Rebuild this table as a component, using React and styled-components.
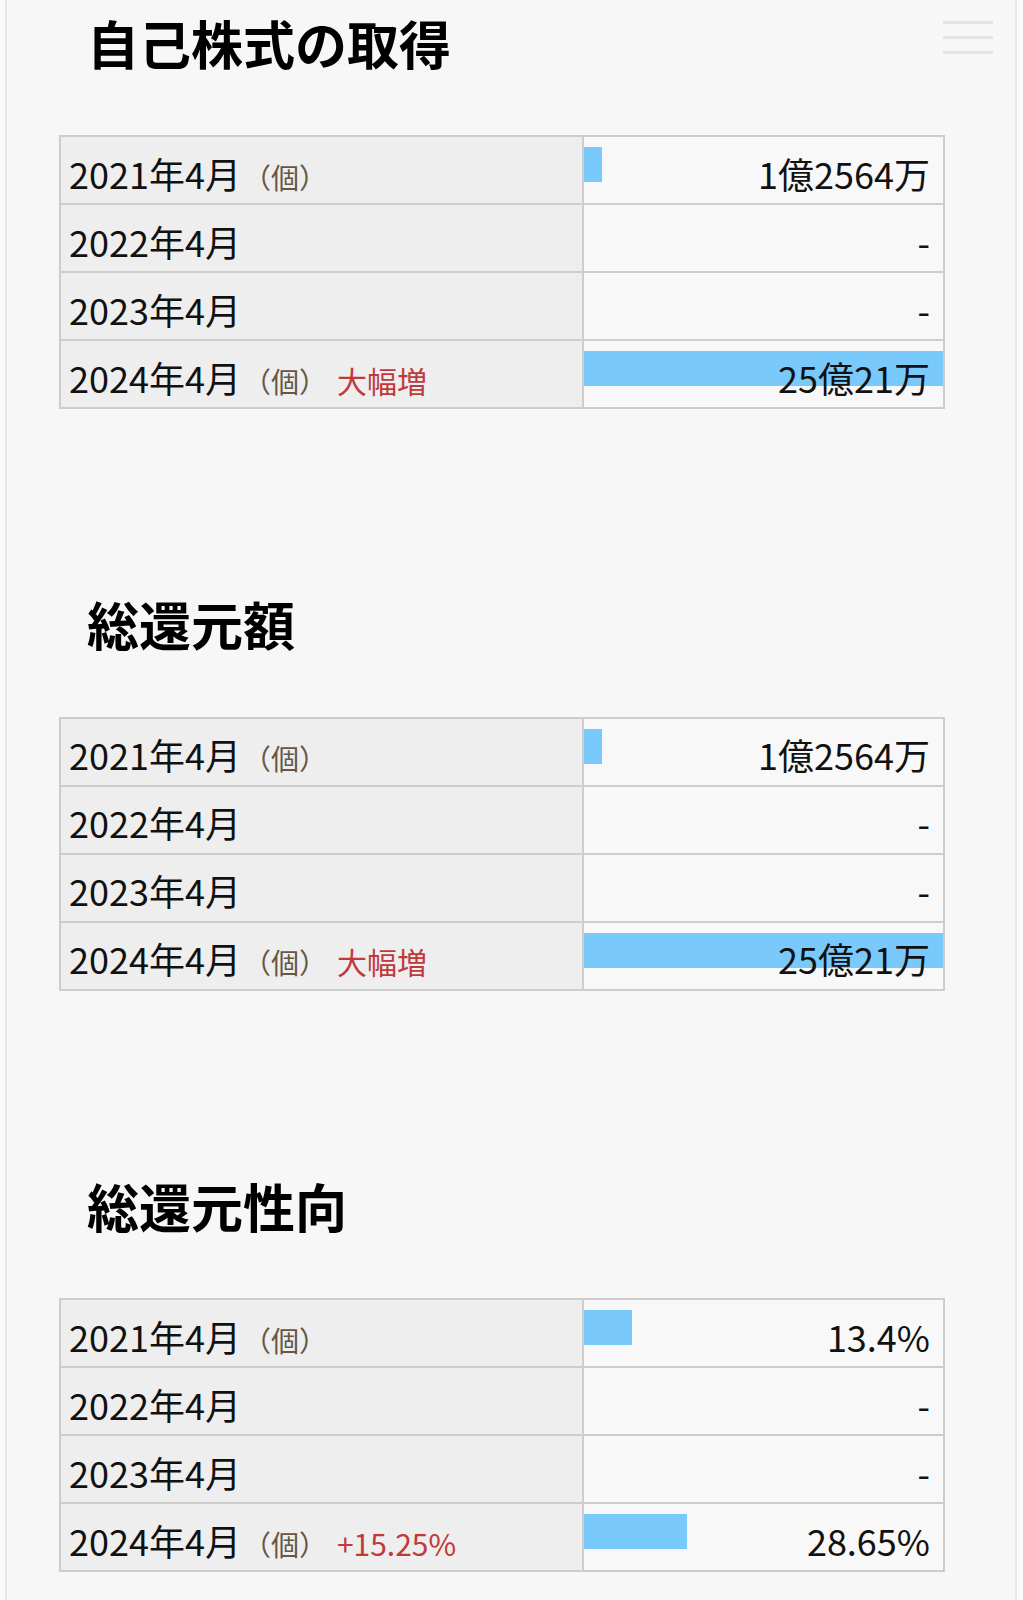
import React from 'react';
import styled, { createGlobalStyle } from 'styled-components';

const GlobalStyle = createGlobalStyle`
  html, body {
    margin: 0;
    padding: 0;
    background: #fafafa;
  }
  body {
    font-family: "Noto Sans CJK JP", "Noto Sans", sans-serif;
    color: #111;
  }
`;

const sections = [
  {
    title: '自己株式の取得',
    rows: [
      { period: '2021年4月', unit: true, value: '1億2564万', bar: 5 },
      { period: '2022年4月', value: '-' },
      { period: '2023年4月', value: '-' },
      { period: '2024年4月', unit: true, note: '大幅増', value: '25億21万', bar: 100 },
    ],
  },
  {
    title: '総還元額',
    rows: [
      { period: '2021年4月', unit: true, value: '1億2564万', bar: 5 },
      { period: '2022年4月', value: '-' },
      { period: '2023年4月', value: '-' },
      { period: '2024年4月', unit: true, note: '大幅増', value: '25億21万', bar: 100 },
    ],
  },
  {
    title: '総還元性向',
    rows: [
      { period: '2021年4月', unit: true, value: '13.4%', bar: 13.4 },
      { period: '2022年4月', value: '-' },
      { period: '2023年4月', value: '-' },
      { period: '2024年4月', unit: true, note: '+15.25%', value: '28.65%', bar: 28.65 },
    ],
  },
];

const App = () => {
  return (
    <Page>
      <GlobalStyle />
      <MenuButton aria-label="menu">
        <MenuLine />
        <MenuLine />
        <MenuLine />
      </MenuButton>
      {sections.map((section) => (
        <Section key={section.title}>
          <Heading>{section.title}</Heading>
          <DataTable>
            {section.rows.map((row) => (
              <Row key={row.period}>
                <LabelCell>
                  <Label>
                    {row.period}
                    {row.unit && <Unit>（個）</Unit>}
                    {row.note && <Note>{row.note}</Note>}
                  </Label>
                </LabelCell>
                <ValueCell>
                  {row.bar && <Bar style={{ width: `${row.bar}%` }} />}
                  <Value>{row.value}</Value>
                </ValueCell>
              </Row>
            ))}
          </DataTable>
        </Section>
      ))}
    </Page>
  );
};

const Page = styled.div`
  position: relative;
  margin: 0 6px 0 5px;
  min-height: 1600px;
  box-sizing: border-box;
  padding: 12px 0 0 52px;
  background: #f7f7f7;
  border-left: 2px solid #e6e6e6;
  border-right: 2px solid #e6e6e6;
`;

const MenuButton = styled.div`
  position: absolute;
  top: 21px;
  right: 22px;
  width: 50px;
  display: flex;
  flex-direction: column;
  gap: 12px;
`;

const MenuLine = styled.span`
  display: block;
  height: 3px;
  background: #e4e4e4;
`;

const Section = styled.section`
  margin-bottom: 184px;

  &:last-child {
    margin-bottom: 0;
  }
`;

const Heading = styled.h2`
  margin: 0 0 61px;
  padding-left: 28px;
  font-size: 52px;
  line-height: 1.2;
  font-weight: 700;
  color: #000;
`;

const DataTable = styled.div`
  width: 886px;
  box-sizing: border-box;
  border: 2px solid #cdcdcd;
`;

const Row = styled.div`
  display: grid;
  grid-template-columns: 523px 1fr;
  height: 68px;
  box-sizing: border-box;
  border-bottom: 2px solid #cdcdcd;

  &:last-child {
    height: 66px;
    border-bottom: none;
  }
`;

const LabelCell = styled.div`
  display: flex;
  align-items: center;
  padding: 6px 0 0 8px;
  background: #eeeeee;
  border-right: 2px solid #cdcdcd;
`;

const Label = styled.span`
  font-size: 36px;
  line-height: 1.3;
  white-space: nowrap;
`;

const Unit = styled.span`
  margin-left: 2px;
  font-size: 28px;
  color: #655645;
`;

const Note = styled.span`
  margin-left: 10px;
  font-size: 30px;
  color: #c0393b;
`;

const ValueCell = styled.div`
  display: grid;
  grid-template-areas: 'stack';
  background: #f8f8f8;
`;

const Bar = styled.div`
  grid-area: stack;
  align-self: start;
  margin-top: 10px;
  height: 35px;
  background: #79c9fb;
`;

const Value = styled.div`
  grid-area: stack;
  align-self: center;
  padding: 6px 13px 0 0;
  text-align: right;
  font-size: 36px;
  line-height: 1.3;
  white-space: nowrap;
`;

export default App;
